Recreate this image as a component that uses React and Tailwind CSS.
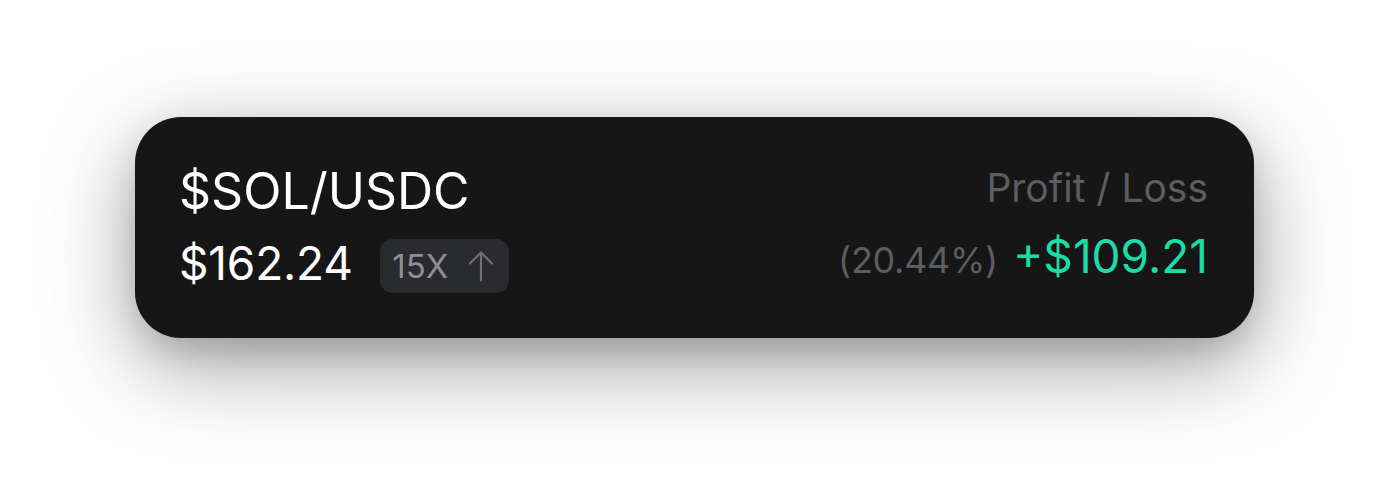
export default function App() {
  return (
    <div className="flex h-[491px] w-full justify-center bg-white pt-[117px]" style={{ fontFamily: "Inter, 'Noto Sans', sans-serif" }}>
      <div className="flex h-[221px] w-[1119px] items-start justify-between rounded-[46px] bg-[#161616] pl-[44px] pr-[46px] pt-[49px] shadow-[0_26px_90px_rgba(0,0,0,0.38),0_14px_30px_rgba(0,0,0,0.12)]">
        <div className="flex flex-col">
          <div className="text-[50px] leading-none text-white">$SOL/USDC</div>
          <div className="mt-[23px] flex items-start gap-[27px]">
            <div className="mt-[1px] text-[46px] leading-none tracking-[-0.2px] text-white">$162.24</div>
            <div className="flex h-[54px] w-[129px] items-center justify-center gap-[20px] rounded-[13px] bg-[#2a2b2e] pr-[2px] text-[33px] leading-none text-[#8e8e93]">
              <span>15X</span>
              <svg width="26" height="31" viewBox="0 0 26 31" fill="none" stroke="#707075" strokeWidth="2.2" strokeLinecap="round" strokeLinejoin="round">
                <path d="M13 29.5V2" />
                <path d="M2 12.5L13 1.5l11 11" />
              </svg>
            </div>
          </div>
        </div>
        <div className="mt-[2px] flex flex-col items-end">
          <div className="text-[39px] leading-none text-[#5c5c61]">Profit / Loss</div>
          <div className="mt-[26px] flex items-baseline gap-[15px] leading-none">
            <span className="text-[36px] tracking-[-0.3px] text-[#5c5c61]">(20.44%)</span>
            <span className="text-[46px] text-[#1ddba6]">+$109.21</span>
          </div>
        </div>
      </div>
    </div>
  );
}
